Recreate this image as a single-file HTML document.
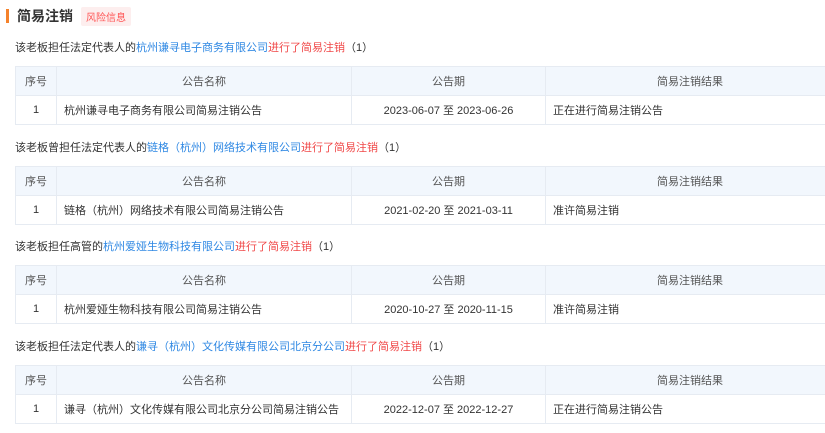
<!DOCTYPE html><html><head><meta charset="utf-8"><style>
body{margin:0;width:825px;height:433px;overflow:hidden;background:#fff;font-family:"Liberation Sans","Noto Sans CJK SC",sans-serif;font-size:11px;color:#333}
.t{position:absolute;left:6px;top:7px;height:18px;display:flex;align-items:center}
.bar{width:3px;height:14px;background:#f5822b;margin-right:8px}
.tt{font-size:14px;font-weight:bold;color:#333}
.tag{margin-left:8px;background:#fdeeee;color:#f55;font-size:10px;padding:2px 5px;border-radius:2px}
.s{position:absolute;left:15px;color:#333;white-space:nowrap}
.b{color:#2f88e3}.r{color:#f04848}
table{position:absolute;left:15px;width:820px;border-collapse:collapse;table-layout:fixed}
td{border:1px solid #e6ebf2;height:28px;padding:0;color:#333;white-space:nowrap}
tr.h td{background:#f2f7fd;text-align:center;color:#555}
.c{text-align:center}.l{padding-left:7px}
</style></head><body>
<div class="t"><div class="bar"></div><span class="tt">简易注销</span><span class="tag">风险信息</span></div>
<div class="s" style="top:39px">该老板担任法定代表人的<span class="b">杭州谦寻电子商务有限公司</span><span class="r">进行了简易注销</span>（1）</div>
<table style="top:66px"><colgroup><col style="width:41px"><col style="width:295px"><col style="width:194px"><col></colgroup>
<tr class="h"><td>序号</td><td>公告名称</td><td>公告期</td><td>简易注销结果</td></tr>
<tr><td class="c">1</td><td class="l">杭州谦寻电子商务有限公司简易注销公告</td><td class="c">2023-06-07 至 2023-06-26</td><td class="l">正在进行简易注销公告</td></tr></table>
<div class="s" style="top:139px">该老板曾担任法定代表人的<span class="b">链格（杭州）网络技术有限公司</span><span class="r">进行了简易注销</span>（1）</div>
<table style="top:166px"><colgroup><col style="width:41px"><col style="width:295px"><col style="width:194px"><col></colgroup>
<tr class="h"><td>序号</td><td>公告名称</td><td>公告期</td><td>简易注销结果</td></tr>
<tr><td class="c">1</td><td class="l">链格（杭州）网络技术有限公司简易注销公告</td><td class="c">2021-02-20 至 2021-03-11</td><td class="l">准许简易注销</td></tr></table>
<div class="s" style="top:238px">该老板担任高管的<span class="b">杭州爱娅生物科技有限公司</span><span class="r">进行了简易注销</span>（1）</div>
<table style="top:265px"><colgroup><col style="width:41px"><col style="width:295px"><col style="width:194px"><col></colgroup>
<tr class="h"><td>序号</td><td>公告名称</td><td>公告期</td><td>简易注销结果</td></tr>
<tr><td class="c">1</td><td class="l">杭州爱娅生物科技有限公司简易注销公告</td><td class="c">2020-10-27 至 2020-11-15</td><td class="l">准许简易注销</td></tr></table>
<div class="s" style="top:338px">该老板担任法定代表人的<span class="b">谦寻（杭州）文化传媒有限公司北京分公司</span><span class="r">进行了简易注销</span>（1）</div>
<table style="top:365px"><colgroup><col style="width:41px"><col style="width:295px"><col style="width:194px"><col></colgroup>
<tr class="h"><td>序号</td><td>公告名称</td><td>公告期</td><td>简易注销结果</td></tr>
<tr><td class="c">1</td><td class="l">谦寻（杭州）文化传媒有限公司北京分公司简易注销公告</td><td class="c">2022-12-07 至 2022-12-27</td><td class="l">正在进行简易注销公告</td></tr></table>
</body></html>
